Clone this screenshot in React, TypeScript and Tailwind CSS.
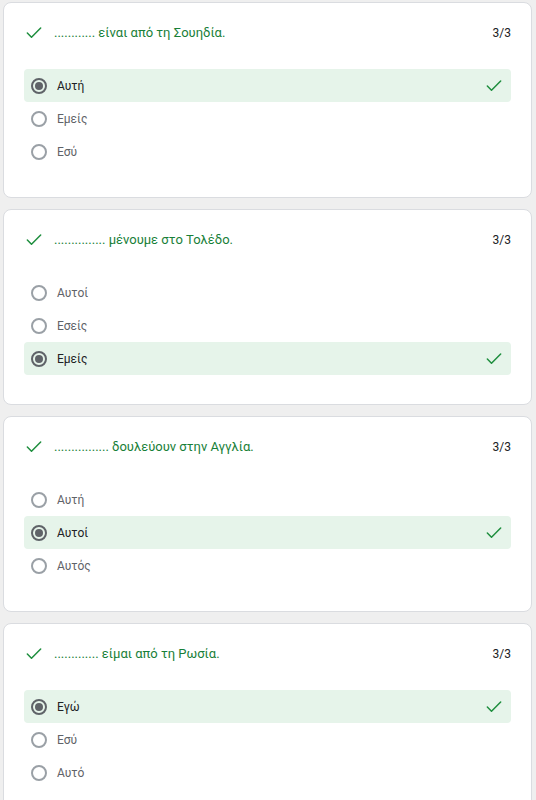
import { Check } from 'lucide-react'
import clsx from 'clsx'

type Question = {
  prompt: string
  options: string[]
  selected: number
}

const questions: Question[] = [
  { prompt: '............ είναι από τη Σουηδία.', options: ['Αυτή', 'Εμείς', 'Εσύ'], selected: 0 },
  { prompt: '............... μένουμε στο Τολέδο.', options: ['Αυτοί', 'Εσείς', 'Εμείς'], selected: 2 },
  { prompt: '................ δουλεύουν στην Αγγλία.', options: ['Αυτή', 'Αυτοί', 'Αυτός'], selected: 1 },
  { prompt: '............. είμαι από τη Ρωσία.', options: ['Εγώ', 'Εσύ', 'Αυτό'], selected: 0 },
]

function Radio({ on }: { on: boolean }) {
  return (
    <span
      className={clsx(
        'flex h-[16px] w-[16px] shrink-0 items-center justify-center rounded-full border-2',
        on ? 'border-[#5f6368]' : 'border-[#9aa0a6]'
      )}
    >
      {on && <span className="h-[8px] w-[8px] rounded-full bg-[#5f6368]" />}
    </span>
  )
}

function QuestionCard({ q }: { q: Question }) {
  return (
    <div className="ml-[3px] mr-[4px] h-[196px] shrink-0 rounded-[8px] border border-[#dadce0] bg-white px-[20px] pt-[20px]">
      <div className="flex h-[20px] items-center">
        <Check className="h-[20px] w-[20px] text-[#1e8e3e]" strokeWidth={1.8} />
        <span className="ml-[10px] flex-1 text-[13px] text-[#188038]">{q.prompt}</span>
        <span className="text-[12px] text-[#202124]">3/3</span>
      </div>
      <div className="mt-[26px] flex flex-col">
        {q.options.map((opt, i) => {
          const on = i === q.selected
          return (
            <div
              key={opt}
              className={clsx(
                'flex h-[33px] items-center rounded-[4px] pl-[7px] pr-[7px]',
                on && 'bg-[#e6f4ea]'
              )}
            >
              <Radio on={on} />
              <span className={clsx('ml-[10px] flex-1 text-[12px]', on ? 'text-[#202124]' : 'text-[#5f6368]')}>
                {opt}
              </span>
              {on && <Check className="h-[20px] w-[20px] text-[#1e8e3e]" strokeWidth={1.8} />}
            </div>
          )
        })}
      </div>
    </div>
  )
}

export default function App() {
  return (
    <div
      className="flex min-h-[800px] flex-col gap-[11px] bg-[#efefef] pt-[2px]"
      style={{ fontFamily: 'Roboto, "Noto Sans", sans-serif' }}
    >
      {questions.map(q => (
        <QuestionCard key={q.prompt} q={q} />
      ))}
    </div>
  )
}
